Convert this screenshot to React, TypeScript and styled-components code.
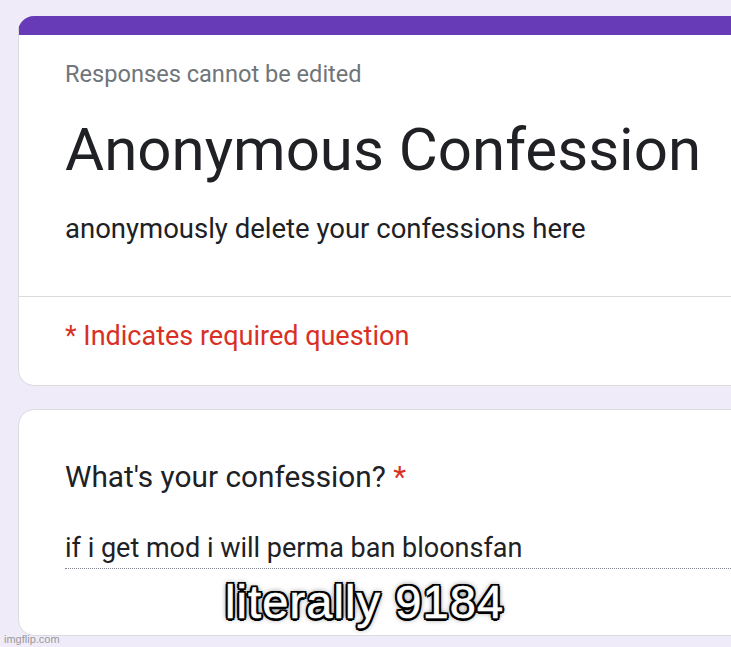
import React from 'react';
import styled, { createGlobalStyle } from 'styled-components';

const Global = createGlobalStyle`
  html, body {
    margin: 0;
    padding: 0;
    background: #f0ebf8;
    font-family: Roboto, "Liberation Sans", Arial, sans-serif;
  }
`;

const Page = styled.div`
  position: relative;
  width: 731px;
  height: 647px;
  overflow: hidden;
  padding: 16px 0 0 18px;
  box-sizing: border-box;
  display: flex;
  flex-direction: column;
  gap: 23px;
`;

const Card = styled.div<{ $accent?: boolean }>`
  width: 760px;
  flex-shrink: 0;
  background: #fff;
  border: 1px solid #dadce0;
  border-radius: 16px;
  overflow: hidden;
  box-sizing: border-box;
  ${({ $accent }) => $accent && 'border-top: 19px solid #673ab7;'}
`;

const Section = styled.div`
  padding: 0 0 0 46px;
`;

const Header = styled(Section)`
  padding-top: 25px;
  padding-bottom: 51px;
  border-bottom: 1px solid #dadce0;
`;

const Note = styled.div`
  color: #70757a;
  font-size: 23.6px;
  line-height: 29px;
`;

const Title = styled.h1`
  margin: 25px 0 0;
  font-weight: 400;
  font-size: 60px;
  line-height: 72px;
  color: #202124;
`;

const Subtitle = styled.div`
  margin-top: 27px;
  font-size: 27.5px;
  line-height: 32px;
  color: #202124;
`;

const Required = styled(Section)`
  padding-top: 23px;
  padding-bottom: 33px;
  color: #d93025;
  font-size: 27px;
  line-height: 32px;
`;

const Question = styled(Section)`
  padding-top: 49px;
  height: 225px;
  box-sizing: border-box;
`;

const Label = styled.div`
  font-size: 29.8px;
  line-height: 36px;
  color: #202124;
  span {
    color: #d93025;
  }
`;

const Answer = styled.div`
  margin-top: 37px;
  font-size: 27px;
  line-height: 32px;
  color: #202124;
  padding-bottom: 4px;
  border-bottom: 1px dotted #80868b;
`;

const Caption = styled.div`
  position: absolute;
  left: 225px;
  top: 578px;
  font-family: "Liberation Sans", Arial, sans-serif;
  font-size: 47px;
  line-height: 48px;
  letter-spacing: 1.1px;
  color: #fff;
  -webkit-text-stroke: 0.6px #fff;
  text-shadow: -2px -2px 0 #000, 2px -2px 0 #000, -2px 2px 0 #000, 2px 2px 0 #000,
    0 2.5px 0 #000, 0 -2.5px 0 #000, 2.5px 0 0 #000, -2.5px 0 0 #000, 0 0 6px #000;
`;

const Watermark = styled.div`
  position: absolute;
  left: 4px;
  bottom: 2px;
  font-family: "Liberation Sans", Arial, sans-serif;
  font-size: 11px;
  color: #9a9a9a;
`;

export default function App() {
  return (
    <>
      <Global />
      <Page>
        <Card $accent>
          <Header>
            <Note>Responses cannot be edited</Note>
            <Title>Anonymous Confession</Title>
            <Subtitle>anonymously delete your confessions here</Subtitle>
          </Header>
          <Required>* Indicates required question</Required>
        </Card>
        <Card>
          <Question>
            <Label>
              What's your confession? <span>*</span>
            </Label>
            <Answer>if i get mod i will perma ban bloonsfan</Answer>
          </Question>
        </Card>
        <Caption>literally 9184</Caption>
        <Watermark>imgflip.com</Watermark>
      </Page>
    </>
  );
}
